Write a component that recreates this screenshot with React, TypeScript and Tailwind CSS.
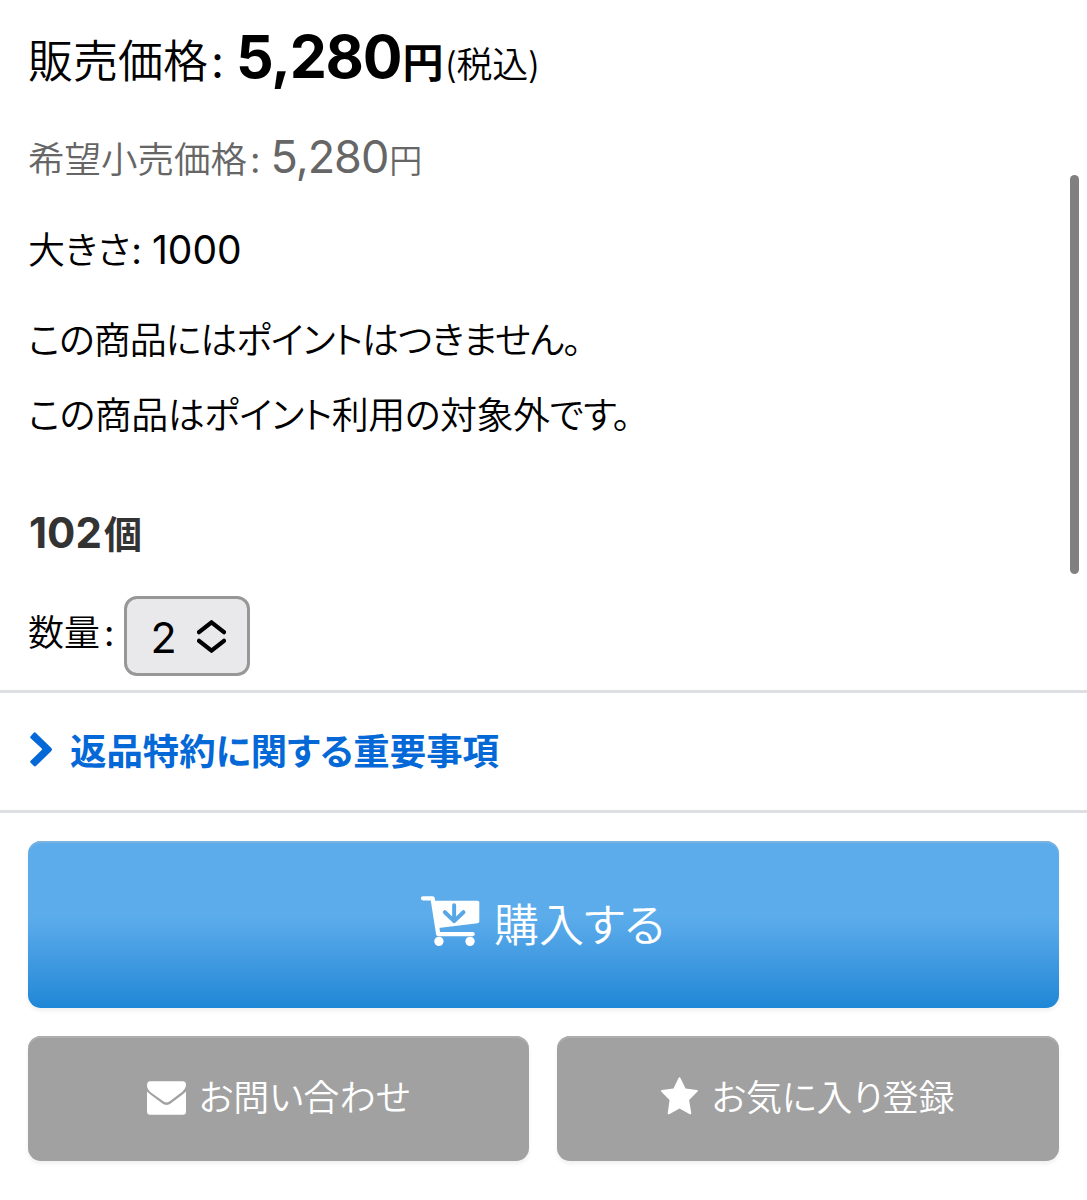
import {ReactNode} from "react";
import {clsx} from "clsx";

const CartIcon = () => (
  <svg viewBox="60 70 184 160" className="w-[61px] h-[53px] mb-2" fill="none">
    <path
      d="M69 83H98L115 191H219"
      stroke="white"
      strokeWidth="13"
      strokeLinecap="round"
      strokeLinejoin="round"
    />
    <path d="M101 90H233Q239 90 239 96V152Q239 157 234 158L116 173Z" fill="white" />
    <circle cx="117" cy="213" r="14" fill="white" />
    <circle cx="211" cy="213" r="14" fill="white" />
    <path
      d="M163 104V149M135 125L163 152L191 125"
      stroke="#57a6e6"
      strokeWidth="12"
      strokeLinecap="round"
      strokeLinejoin="round"
    />
  </svg>
);

const MailIcon = () => (
  <svg viewBox="0 0 110 94" className="w-[39px] h-[34px]" fill="white">
    <path d="M9 0H101Q110 0 110 10Q110 22 92 35L68 53Q60 60 55 60Q50 60 42 53L13 33Q0 23 0 12Q0 0 9 0Z" />
    <path d="M0 29Q4 34 36 57Q48 67 55 67Q62 67 74 57Q106 34 110 29V85Q110 94 101 94H9Q0 94 0 85Z" />
  </svg>
);

const StarIcon = () => (
  <svg viewBox="0 0 104 106" className="w-[37px] h-[38px] mb-1" fill="white">
    <path d="M52 0Q54 0 55 3L69 32L101 36Q106 37 102 41L79 64L85 101Q85 106 81 104L52 88L23 104Q18 106 19 101L24 64L1 41Q-2 37 3 36L35 32L49 3Q50 0 52 0Z" />
  </svg>
);

const ChevronIcon = () => (
  <svg viewBox="0 0 67 105" className="w-[22px] h-[35px] mb-1" fill="#0468d7">
    <path d="M12 1Q15 -1 18 2L65 48Q69 52 65 57L18 103Q15 106 12 103L2 93Q-1 90 2 87L35 55Q38 52 35 49L2 18Q-1 15 2 12Z" />
  </svg>
);

const SelectArrows = () => (
  <svg viewBox="0 0 86 98" className="w-[29px] h-[33px]" fill="none">
    <path
      d="M6 36L43 7L80 36M6 62L43 91L80 62"
      stroke="black"
      strokeWidth="13"
      strokeLinecap="round"
      strokeLinejoin="round"
    />
  </svg>
);

const SubButton = ({icon, children}: {icon: ReactNode; children: ReactNode}) => (
  <button
    className={clsx(
      "h-[125px] rounded-[13px] bg-[#a1a1a1] text-white font-[350] text-[36px]",
      "flex items-center justify-center gap-[13px] pb-[2px]",
      "shadow-[inset_0_2px_0_#aeaeae,0_3px_4px_rgba(0,0,0,0.06)]"
    )}
  >
    {icon}
    <span>{children}</span>
  </button>
);

const App = () => {
  return (
    <div className="relative w-[1087px] h-[1200px] overflow-hidden bg-white text-black whitespace-nowrap font-[Inter,'Noto_Sans_CJK_JP',sans-serif] [font-feature-settings:'palt']">
      <section className="h-[690px] px-7 pt-[21px]">
        <p className="h-[75px] leading-[72px] flex items-baseline font-[350] text-[45px]">
          <span>
            販売価格<span className="ml-[3px] font-normal">:</span>
          </span>
          <b className="ml-3 text-[59px] font-bold tracking-[-1.2px]">5,280</b>
          <b className="ml-px text-[41px] font-bold">円</b>
          <span className="ml-px text-[36px] tracking-[-0.4px]">(税込)</span>
        </p>
        <p className="mt-7 h-[66px] leading-[66px] flex items-baseline font-[350] text-[36.5px] text-[#666]">
          <span>
            希望小売価格<span className="ml-[3px] font-normal">:</span>
          </span>
          <span className="ml-[10px] text-[45px] font-normal tracking-[-1px]">5,280</span>
          <span className="ml-px text-[33px]">円</span>
        </p>
        <p className="mt-7 h-[64px] leading-[64px] flex items-baseline font-[350] text-[37px]">
          <span>
            大きさ<span className="ml-px font-normal">:</span>
          </span>
          <span className="ml-[10px] text-[39px] font-normal">1000</span>
        </p>
        <p className="mt-[21px] h-[75px] leading-[75px] font-[350] text-[37px] tracking-[-1px]">
          この商品にはポイントはつきません。
        </p>
        <p className="h-[75px] leading-[75px] font-[350] text-[37px] tracking-[-0.5px]">
          この商品はポイント利用の対象外です。
        </p>
        <p className="mt-12 ml-px h-[64px] leading-[64px] flex items-baseline font-bold text-[#333]">
          <span className="text-[42px]">102</span>
          <span className="ml-[2px] text-[38px]">個</span>
        </p>
        <div className="mt-[31px] flex items-center text-[36px]">
          <span className="pb-[6px] font-[350]">
            数量<span className="ml-[4px] font-normal">:</span>
          </span>
          <button className="ml-[10px] w-[126px] h-[80px] rounded-[13px] border-3 border-[#979797] bg-[#e9e9eb] pl-[23px] flex items-center gap-[20px] text-[43px]">
            <span className="pt-[2px]">2</span>
            <SelectArrows />
          </button>
        </div>
      </section>

      <a className="h-[123px] px-[30px] border-y-3 border-[#dedfe2] flex items-center gap-[18px] text-[#0468d7]">
        <ChevronIcon />
        <span className="pt-[2px] text-[36.4px] font-bold">返品特約に関する重要事項</span>
      </a>

      <section className="px-7 pt-7">
        <button className="w-full h-[167px] rounded-[13px] bg-linear-to-b from-[#5caceb] from-45% to-[#1d87d6] flex items-center justify-center gap-[13px] pr-[2px] text-white font-[350] text-[45px] shadow-[inset_0_2px_0_#7ab3e0,0_3px_4px_rgba(0,0,0,0.06)]">
          <CartIcon />
          <span className="pt-[2px]">購入する</span>
        </button>
        <div className="mt-7 grid grid-cols-[501px_502px] gap-7">
          <SubButton icon={<MailIcon />}>お問い合わせ</SubButton>
          <SubButton icon={<StarIcon />}>お気に入り登録</SubButton>
        </div>
      </section>

      <div className="absolute right-2 top-[175px] w-[9px] h-[399px] rounded-full bg-[#808080]" />
    </div>
  );
};

export default App;
